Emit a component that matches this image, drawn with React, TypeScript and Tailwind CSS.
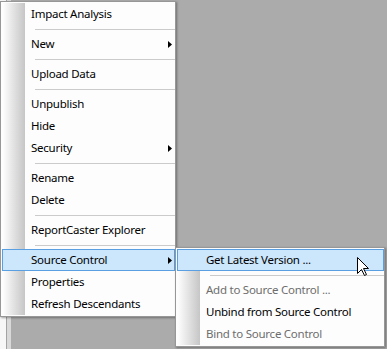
import React from 'react'

type Entry =
  | { kind: 'item'; label: string; sub?: boolean; active?: boolean; disabled?: boolean }
  | { kind: 'sep' }

const MAIN: Entry[] = [
  { kind: 'item', label: 'Impact Analysis' },
  { kind: 'sep' },
  { kind: 'item', label: 'New', sub: true },
  { kind: 'sep' },
  { kind: 'item', label: 'Upload Data' },
  { kind: 'sep' },
  { kind: 'item', label: 'Unpublish' },
  { kind: 'item', label: 'Hide' },
  { kind: 'item', label: 'Security', sub: true },
  { kind: 'sep' },
  { kind: 'item', label: 'Rename' },
  { kind: 'item', label: 'Delete' },
  { kind: 'sep' },
  { kind: 'item', label: 'ReportCaster Explorer' },
  { kind: 'sep' },
  { kind: 'item', label: 'Source Control', sub: true, active: true },
  { kind: 'item', label: 'Properties' },
  { kind: 'item', label: 'Refresh Descendants' },
]

const SOURCE: Entry[] = [
  { kind: 'item', label: 'Get Latest Version ...', active: true },
  { kind: 'sep' },
  { kind: 'item', label: 'Add to Source Control ...', disabled: true },
  { kind: 'item', label: 'Unbind from Source Control' },
  { kind: 'item', label: 'Bind to Source Control', disabled: true },
]

function Gutter() {
  return <div className="h-full w-[22px] shrink-0 bg-gradient-to-r from-[#fdfdfd] to-[#c6c6c6]" />
}

function Row({ e }: { e: Entry }) {
  if (e.kind === 'sep') {
    return (
      <div className="flex h-[8px] pl-[1px]">
        <Gutter />
        <div className="ml-[10px] mt-[4px] h-px flex-1 bg-[#cbcbcb]" />
      </div>
    )
  }
  return (
    <div
      className={
        e.active
          ? 'flex h-[22px] items-center border border-[#5a9fe2] bg-[#cce6fc]'
          : 'flex h-[22px] items-center pl-[1px]'
      }
    >
      {e.active ? <div className="w-[22px] shrink-0" /> : <Gutter />}
      <span className={'ml-[6px] whitespace-nowrap ' + (e.disabled ? 'text-[#6d6d6d]' : 'text-black')}>{e.label}</span>
      {e.sub && (
        <svg width="4" height="7" viewBox="0 0 4 7" className={e.active ? 'ml-auto mr-[2px]' : 'ml-auto mr-[3px]'}>
          <polygon points="0,0 4,3.5 0,7" fill="#000" />
        </svg>
      )}
    </div>
  )
}

function Menu({ items, className }: { items: Entry[]; className: string }) {
  return (
    <div className={'absolute flex flex-col border border-[#979797] bg-[#fdfdfd] py-[1px] pl-[1px] shadow-[1px_1px_2px_rgba(0,0,0,0.35)] ' + className}>
      {items.map((e, i) => <Row key={i} e={e} />)}
    </div>
  )
}

export default function App() {
  return (
    <div className="relative flex h-[349px] w-[387px] overflow-hidden bg-[#ababab] text-[11.5px] tracking-[-0.25px] font-['Noto_Sans',sans-serif]">
      <div className="h-full w-[6px] bg-[#f7f7f7]" />
      <div className="h-full w-[5px] border-l border-[#a3a3a3] bg-[#d9d9d9]" />

      <Menu items={MAIN} className="left-0 top-[1px] w-[176px]" />
      <Menu items={SOURCE} className="left-[175px] top-[247px] w-[210px]" />

      <svg width="13" height="20" viewBox="0 0 13 20" className="absolute left-[357px] top-[257px]">
        <path d="M0.5 0.5 L0.5 16.5 L4.5 12.5 L7.5 18.5 L9.5 17.5 L6.5 11.5 L11.5 11.5 Z" fill="#fff" stroke="#000" strokeWidth="1" />
      </svg>
    </div>
  )
}
